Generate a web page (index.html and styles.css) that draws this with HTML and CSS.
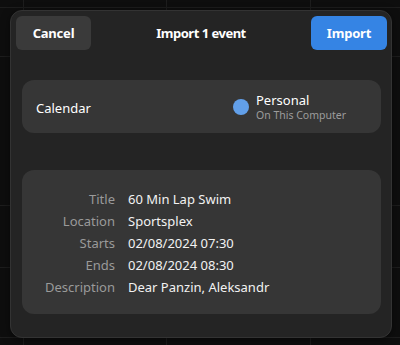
FILE: index.html
```html
<!DOCTYPE html>
<html lang="en">
<head>
    <meta charset="UTF-8">
    <meta name="viewport" content="width=device-width, initial-scale=1.0">
    <title>Import 1 event</title>
    <link rel="stylesheet" href="styles.css">
</head>
<body>
    <div class="dialog">
        <div class="header">
            <button class="btn btn-cancel">Cancel</button>
            <div class="header-title">Import 1 event</div>
            <button class="btn btn-import">Import</button>
        </div>

        <div class="content">
            <div class="card calendar-row">
                <span class="row-label">Calendar</span>
                <div class="calendar-pick">
                    <span class="dot"></span>
                    <div class="calendar-text">
                        <div class="calendar-name">Personal</div>
                        <div class="calendar-source">On This Computer</div>
                    </div>
                </div>
            </div>

            <div class="card details">
                <span class="detail-key">Title</span>
                <span class="detail-value">60 Min Lap Swim</span>
                <span class="detail-key">Location</span>
                <span class="detail-value">Sportsplex</span>
                <span class="detail-key">Starts</span>
                <span class="detail-value">02/08/2024 07:30</span>
                <span class="detail-key">Ends</span>
                <span class="detail-value">02/08/2024 08:30</span>
                <span class="detail-key">Description</span>
                <span class="detail-value">Dear Panzin, Aleksandr</span>
            </div>
        </div>
    </div>
</body>
</html>
```

FILE: styles.css
```css
html, body {
    height: 100%;
}
body {
    margin: 0;
    padding: 10px 8px 7px 10px;
    box-sizing: border-box;
    font-family: "Noto Sans", "Open Sans", sans-serif;
    color: #ffffff;
    background-color: #0e0e0e;
    background-image:
        linear-gradient(#1d1d1d, #1d1d1d),
        linear-gradient(#1d1d1d, #1d1d1d),
        linear-gradient(#1d1d1d, #1d1d1d),
        linear-gradient(#1d1d1d, #1d1d1d),
        linear-gradient(#1d1d1d, #1d1d1d),
        linear-gradient(#1d1d1d, #1d1d1d),
        linear-gradient(#1d1d1d, #1d1d1d),
        linear-gradient(#1d1d1d, #1d1d1d);
    background-repeat: no-repeat;
    background-size: 1px 100%, 1px 100%, 1px 100%, 100% 1px, 100% 1px, 100% 1px, 100% 1px, 100% 1px;
    background-position: 23px 0, 166px 0, 310px 0, 0 7px, 0 56px, 0 205px, 0 267px, 0 337px;
}
.dialog {
    width: 382px;
    height: 328px;
    box-sizing: border-box;
    background: #242424;
    border: 1px solid #333333;
    border-radius: 12px;
    box-shadow: 0 2px 8px rgba(0, 0, 0, 0.5);
    display: flex;
    flex-direction: column;
}
.header {
    display: flex;
    align-items: center;
    justify-content: space-between;
    padding: 5px 4px 0 5px;
}
.header-title {
    font-size: 13px;
    font-weight: bold;
    letter-spacing: -0.5px;
}
.btn {
    height: 34px;
    border: none;
    border-radius: 6px;
    font-family: inherit;
    font-size: 13px;
    font-weight: bold;
    letter-spacing: -0.2px;
    color: #ffffff;
    padding: 0;
}
.btn-cancel {
    width: 75px;
    background: #3a3a3a;
}
.btn-import {
    width: 76px;
    background: #3584e4;
}
.content {
    padding: 30px 10px 0 11px;
    display: flex;
    flex-direction: column;
    gap: 37px;
}
.card {
    background: #363636;
    border-radius: 12px;
}
.calendar-row {
    height: 53px;
    display: flex;
    align-items: center;
    padding: 0 0 0 14px;
    font-size: 13px;
}
.row-label {
    padding-top: 3px;
}
.calendar-pick {
    margin-left: auto;
    width: 148px;
    display: flex;
    align-items: center;
    gap: 7px;
}
.dot {
    width: 16px;
    height: 16px;
    border-radius: 50%;
    background: #62a0ea;
    flex: none;
}
.calendar-name {
    font-size: 13px;
    line-height: 16px;
}
.calendar-source {
    font-size: 10.5px;
    line-height: 14px;
    color: #9c9c9c;
}
.details {
    height: 144px;
    box-sizing: border-box;
    padding: 18px 0 0;
    display: grid;
    grid-template-columns: 93px 1fr;
    grid-auto-rows: 22px;
    column-gap: 13px;
    align-items: center;
    font-size: 13px;
}
.detail-key {
    text-align: right;
    color: #9a9a9a;
}
.detail-value {
    color: #f2f2f2;
}
```
